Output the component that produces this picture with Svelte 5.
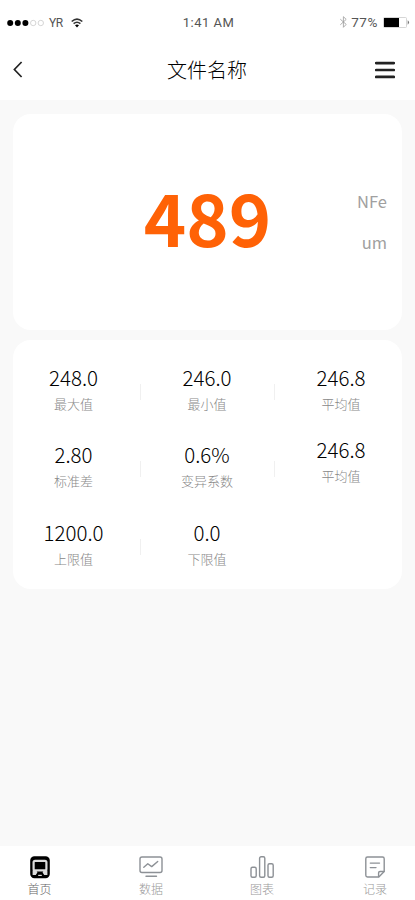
<script>
  let active = $state('home')

  const stats = [
    { label: '最大值', value: '248.0', divider: true },
    { label: '最小值', value: '246.0', divider: true },
    { label: '平均值', value: '246.8' },
    { label: '标准差', value: '2.80', divider: true },
    { label: '变异系数', value: '0.6%', divider: true },
    { label: '平均值', value: '246.8', raised: true },
    { label: '上限值', value: '1200.0', divider: true },
    { label: '下限值', value: '0.0' }
  ]

  const tabs = [
    { id: 'home', label: '首页' },
    { id: 'data', label: '数据' },
    { id: 'chart', label: '图表' },
    { id: 'log', label: '记录' }
  ]
</script>

<div class="page">
  <div class="status">
    <div class="carrier">
      <svg width="38" height="8" viewBox="0 0 38 8">
        <circle cx="3.2" cy="4" r="3" />
        <circle cx="10.8" cy="4" r="3" />
        <circle cx="18.4" cy="4" r="3" />
        <circle class="empty" cx="26.2" cy="4" r="2.7" />
        <circle class="empty" cx="33.8" cy="4" r="2.7" />
      </svg>
      <span class="name">YR</span>
      <svg width="12" height="10" viewBox="0 0 12 10">
        <path class="wave" d="M.7 3.5Q6-1.2 11.3 3.5M2.6 5.7Q6 2.8 9.4 5.7" />
        <path d="M4 7.3Q6 5.8 8 7.3L6 9.6Z" />
      </svg>
    </div>
    <span class="time">1:41 AM</span>
    <div class="power">
      <svg width="9" height="14" viewBox="0 0 9 14">
        <path class="bt" d="M1.3 4.2 7.2 9.4 4.4 12.3V1.7L7.2 4.4 1.3 9.8" />
      </svg>
      <span class="percent">77%</span>
      <svg width="27" height="11" viewBox="0 0 27 11">
        <rect class="shell" x=".5" y=".5" width="23" height="10" rx="1" />
        <rect x="1" y="1" width="15" height="9" />
        <path class="cap" d="M24.7 3.3Q27.4 5.5 24.7 7.7Z" />
      </svg>
    </div>
  </div>

  <header>
    <button aria-label="back">
      <svg width="10" height="17" viewBox="0 0 10 17">
        <path class="back" d="M8.6 1 1.4 8.5 8.6 16" />
      </svg>
    </button>
    <h1>文件名称</h1>
    <button aria-label="menu">
      <svg width="20" height="18" viewBox="0 0 20 18">
        <path class="menu" d="M1.2 2.1H18.8M1.2 9H18.8M1.2 15.9H18.8" />
      </svg>
    </button>
  </header>

  <main>
    <section class="card reading">
      <strong>489</strong>
      <div class="units">
        <span>NFe</span>
        <span>um</span>
      </div>
    </section>

    <section class="card stats">
      {#each stats as s}
        <div class="stat" class:divider={s.divider} class:raised={s.raised}>
          <span class="value">{s.value}</span>
          <span class="label">{s.label}</span>
        </div>
      {/each}
    </section>
  </main>

  <nav>
    {#each tabs as tab}
      <button class="tab" class:active={active === tab.id} onclick={() => (active = tab.id)}>
        <svg width="26" height="26" viewBox="0 0 26 26">
          {#if tab.id === 'home'}
            <rect class="body" x="3.2" y="2.2" width="19.6" height="22" rx="4.2" />
            <rect class="window" x="6.6" y="6.8" width="12.8" height="9.6" rx="1.5" />
            <path class="lamp" d="M5.6 16.6H9.4L10.4 18.4 8.8 21H5.6ZM20.4 16.6H16.6L15.6 18.4 17.2 21H20.4Z" />
            <path class="lamp" d="M11.2 20.8H14.8V22H11.2Z" />
          {:else if tab.id === 'data'}
            <rect x="2" y="3" width="22" height="15.5" rx="2" />
            <path d="M5.8 13.3 9.8 9.8 13.7 12.6 19.7 7.5M8 22.3H18.5" />
          {:else if tab.id === 'chart'}
            <rect x="2" y="13.3" width="5.2" height="10" rx="1.5" />
            <rect x="10.6" y="2.8" width="5.2" height="20.5" rx="1.5" />
            <rect x="19" y="9.8" width="5.2" height="13.5" rx="1.5" />
          {:else}
            <path d="M5.5 3H20.5Q22.2 3 22.2 4.7V17.5L16.8 23H5.5Q3.8 23 3.8 21.3V4.7Q3.8 3 5.5 3Z" />
            <path d="M16.6 22.6V18.8Q16.6 17.5 18 17.5H22M8.3 9.1H17.5M8.3 13.6H14" />
          {/if}
        </svg>
        <span>{tab.label}</span>
      </button>
    {/each}
  </nav>
</div>

<style>
  :global(body) {
    margin: 0;
  }
  .page {
    display: flex;
    flex-direction: column;
    height: 900px;
    background: #f9f9f9;
    font-family: 'Noto Sans CJK SC', sans-serif;
    color: #222;
  }
  svg {
    display: block;
    flex: none;
  }
  button {
    border: none;
    background: none;
    padding: 0;
    font-family: inherit;
    cursor: pointer;
  }

  .status {
    display: grid;
    grid-template-columns: 1fr auto 1fr;
    align-items: center;
    box-sizing: border-box;
    height: 39px;
    padding: 6px 5px 0 7px;
    background: #fff;
    font-family: Roboto, sans-serif;
    font-size: 13px;
    color: #555;
  }
  .carrier,
  .power {
    display: flex;
    align-items: center;
  }
  .power {
    justify-content: flex-end;
  }
  .name {
    margin: 0 8px 0 4px;
    font-size: 12px;
    letter-spacing: -0.4px;
  }
  .time {
    letter-spacing: 0.5px;
  }
  .percent {
    margin: 0 5px 0 3px;
    font-size: 13.5px;
    line-height: 14px;
    letter-spacing: 0.6px;
  }
  .power {
    padding-bottom: 1px;
  }
  .empty,
  .shell {
    fill: none;
    stroke: #ccc;
    stroke-width: 0.8;
  }
  .wave {
    fill: none;
    stroke: #333;
    stroke-width: 1.6;
  }
  .bt {
    fill: none;
    stroke: #999;
    stroke-width: 0.8;
  }
  .cap {
    fill: #777;
  }

  header {
    display: flex;
    align-items: center;
    justify-content: space-between;
    box-sizing: border-box;
    height: 61px;
    padding: 0 20px 0 13px;
    background: #fff;
  }
  h1 {
    margin: 0 0 0 16px;
    font-size: 20px;
    font-weight: 300;
    line-height: 60px;
    color: #000;
  }
  .back,
  .menu {
    fill: none;
    stroke: #222;
    stroke-width: 1.7;
  }
  .menu {
    stroke-width: 2.7;
    stroke-linecap: round;
  }

  main {
    flex: 1;
    padding: 14px 13px 0;
  }
  .card {
    box-sizing: border-box;
    border-radius: 18px;
    background: #fff;
  }
  .reading {
    display: grid;
    grid-template-columns: 1fr auto 1fr;
    align-items: center;
    height: 216px;
    padding: 0 15px 1px;
  }
  .reading strong {
    grid-column: 2;
    padding-bottom: 11px;
    font-size: 72px;
    font-weight: 700;
    line-height: 72px;
    color: #ff6206;
  }
  .units {
    display: flex;
    flex-direction: column;
    align-items: flex-end;
    font-size: 16.5px;
    line-height: 41px;
    color: #a0a0a0;
  }
  .stats {
    display: grid;
    grid-template-columns: 127px 134px 128px;
    grid-template-rows: 77px 78px 77px;
    height: 249px;
    margin-top: 10px;
    padding-top: 23px;
  }
  .stat {
    display: flex;
    flex-direction: column;
    align-items: center;
    position: relative;
  }
  .stat:nth-child(3n + 1) {
    padding-right: 6px;
  }
  .stat:nth-child(3n) {
    padding-left: 6px;
  }
  .raised {
    margin-top: -5px;
  }
  .divider::after {
    content: '';
    position: absolute;
    top: 21px;
    right: -1px;
    width: 1px;
    height: 16px;
    background: #f0f0f0;
  }
  .value {
    font-size: 20.5px;
    font-weight: 300;
    line-height: 28px;
    color: #000;
  }
  .label {
    font-size: 13px;
    font-weight: 300;
    line-height: 25px;
    color: #888;
  }

  nav {
    display: grid;
    grid-template-columns: 95px 128px 94px 98px;
    box-sizing: border-box;
    height: 54px;
    background: #fff;
  }
  .tab {
    display: flex;
    flex-direction: column;
    align-items: center;
    padding-top: 8px;
    padding-right: 16px;
    font-size: 12px;
    font-weight: 300;
    line-height: 17px;
    color: #999;
  }
  .tab:last-child {
    padding-right: 0;
    padding-left: 18px;
  }
  .tab svg {
    fill: none;
    stroke: #8d9196;
    stroke-width: 1.4;
    stroke-linecap: round;
    stroke-linejoin: round;
  }
  .tab.active {
    color: #666;
  }
  .tab .body {
    fill: #8d9196;
    stroke: none;
  }
  .tab.active .body {
    fill: #000;
  }
  .tab .window {
    stroke: #ddd;
    stroke-width: 2.2;
  }
  .tab .lamp {
    fill: #ddd;
    stroke: none;
  }
</style>
